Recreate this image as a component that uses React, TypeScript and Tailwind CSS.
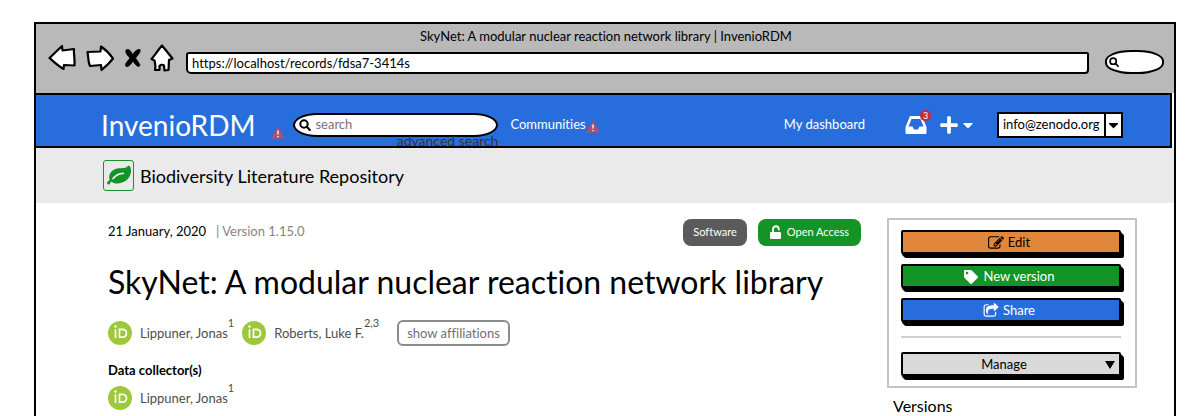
import React from "react";
import { FaCaretDown, FaPlus, FaTag } from "react-icons/fa";

function ArrowLeft() {
  return (
    <svg viewBox="0 0 28 28" className="size-7" fill="white" stroke="black" strokeWidth="2.2" strokeLinejoin="round" aria-hidden="true">
      <path d="M1.5 14 14 2 14.500 6.500 26 5 C25.500 10 27 15 26.500 21.500 L16 21 15.500 25 C10 22 6 18 1.500 14Z" />
    </svg>
  );
}

function ArrowRight() {
  return (
    <svg viewBox="0 0 28 28" className="size-7" fill="white" stroke="black" strokeWidth="2.2" strokeLinejoin="round" aria-hidden="true">
      <path d="M1.500 8 14.500 7.500 15 2.500 C20 6 24 10 27 14.500 C23 20 19 23 15.500 26 L15 21 4 22 C2 18 2.500 13 1.500 8Z" />
    </svg>
  );
}

function Stop() {
  return (
    <svg viewBox="0 0 18 20" className="h-5 w-[18px]" stroke="black" strokeWidth="0.8" aria-hidden="true">
      <path d="M2 2 C4 .5 7 2 8.500 7 C10 4 13 1 16 1.500 C17 4 14 7 11.500 10 C13 12 15 15 16 17 C15 20 12 18 9 13 C7 16 5 19 2 18.500 C0 16 4 13 6 10 C4 8 1 5 2 2Z" />
    </svg>
  );
}

function Home() {
  return (
    <svg viewBox="0 0 24 28" className="h-7 w-6" fill="white" stroke="black" strokeWidth="2.2" strokeLinejoin="round" aria-hidden="true">
      <path d="M12 1.500 22.500 14.500 19 16 18.500 26 14.500 26.500 14 21.500 C12 20 10 21 9.500 22 L9.500 26 5 26 C6 22 5 19 4.500 16.500 L1.500 15 C5 11 8 6 12 1.500Z" />
    </svg>
  );
}

function Magnifier({ className }: { className: string }) {
  return (
    <svg viewBox="0 0 12 12" className={className} fill="none" stroke="black" strokeWidth="2" strokeLinecap="round" aria-hidden="true">
      <circle cx="5" cy="5" r="3.700" />
      <path d="M7.800 7.800 10.800 11" />
    </svg>
  );
}

function Warning() {
  return (
    <svg viewBox="0 0 14 13" className="h-[13px] w-3.5 shrink-0" aria-hidden="true">
      <path d="M7 .5 13.700 12.500H.3Z" fill="#b25069" />
      <path d="M7 4.500v4M7 10v1.300" stroke="#ecd4e0" strokeWidth="1.700" />
    </svg>
  );
}

function Leaf() {
  return (
    <svg viewBox="0 0 1792 1792" className="size-6" fill="currentColor" aria-hidden="true">
      <path d="M1280 704q0-26-19-45t-45-19q-172 0-318 49.500t-259.500 134-235.500 219.500q-19 21-19 45 0 26 19 45t45 19q24 0 45-19 27-24 74-71t67-66q137-124 268.500-176t313.500-52q26 0 45-19t19-45zm512-198q0 95-20 193-46 224-184.500 383t-357.500 268q-214 108-438 108-148 0-286-47-15-5-88-42t-96-37q-16 0-39.500 32t-45 70-52.500 70-60 32q-43 0-63.500-17.500t-45.500-59.500q-2-4-6-11t-5.500-10-3-9.500-1.500-13.500q0-35 31-73.500t68-65.500 68-56 31-48q0-4-14-38t-16-44q-9-51-9-104 0-115 43.500-220t119-184.500 170.500-139 204-95.500q55-18 145-25.500t179.500-9 178.500-6 163.500-24 113.500-56.500l29.500-29.500 29.500-28 27-20 36.500-16 43.500-4.500q39 0 70.500 46t47.500 112 24 124 8 96z" />
    </svg>
  );
}

function Inbox() {
  return (
    <svg viewBox="0 0 22 18" className="h-[18px] w-[22px]" aria-hidden="true">
      <path d="M5 0H17L21.500 11V17Q21.500 18 20.500 18H1.500Q.5 18 .5 17V11ZM6.500 3 3.500 10.500H7.500L9 13.500H13L14.500 10.500H18.500L15.500 3Z" fill="white" fillRule="evenodd" />
    </svg>
  );
}

function Unlock() {
  return (
    <svg viewBox="0 0 11 14" className="h-3.5 w-[11px]" aria-hidden="true">
      <rect y="7" width="11" height="7" rx="1" fill="white" />
      <path d="M3 7.500V4.300C3 .2 8.800.2 8.800 4.500" fill="none" stroke="white" strokeWidth="1.800" strokeLinecap="round" />
    </svg>
  );
}

function EditIcon() {
  return (
    <svg viewBox="0 0 1792 1792" className="size-4" fill="currentColor" aria-hidden="true">
      <path d="M888 1184l116-116-152-152-116 116v56h96v96h56zm440-720q-16-16-33 1l-350 350q-17 17-1 33t33-1l350-350q17-17 1-33zm80 594v190q0 119-84.500 203.500t-203.500 84.500h-832q-119 0-203.500-84.500t-84.500-203.500v-832q0-119 84.500-203.500t203.500-84.500h832q63 0 117 25 15 7 18 23 3 17-9 29l-49 49q-14 14-32 8-23-6-45-6h-832q-66 0-113 47t-47 113v832q0 66 47 113t113 47h832q66 0 113-47t47-113v-126q0-13 9-22l64-64q15-15 35-7t20 29zm-96-738l288 288-672 672h-288v-288zm444 132l-92 92-288-288 92-92q28-28 68-28t68 28l152 152q28 28 28 68t-28 68z" />
    </svg>
  );
}

function ShareIcon() {
  return (
    <svg viewBox="0 0 1792 1792" className="size-4" fill="currentColor" aria-hidden="true">
      <path d="M1472 989v259q0 119-84.500 203.500t-203.500 84.500h-832q-119 0-203.500-84.500t-84.500-203.500v-832q0-119 84.500-203.500t203.500-84.500h255q13 0 22.500 9.500t9.500 22.500q0 27-26 32-77 26-133 60-10 4-16 4h-112q-66 0-113 47t-47 113v832q0 66 47 113t113 47h832q66 0 113-47t47-113v-214q0-19 18-29 28-13 54-37 16-16 35-8 21 9 21 29zm237-496l-384 384q-18 19-45 19-12 0-25-5-39-17-39-59v-192h-160q-323 0-438 131-119 137-74 473 3 23-20 34-8 2-12 2-16 0-26-13-10-14-21-31t-39.500-68.500-49.500-99.500-38.500-114-17.500-122q0-49 3.500-91t14-90 28-88 47-81.500 68.500-74 94.500-61.500 124.500-48.500 159.500-30.500 196.500-11h160v-192q0-42 39-59 13-5 25-5 26 0 45 19l384 384q19 19 19 45t-19 45z" />
    </svg>
  );
}

function Orcid() {
  return (
    <svg viewBox="0 0 24 24" className="size-6 shrink-0" aria-hidden="true">
      <circle cx="12" cy="12" r="12" fill="#9dc83c" />
      <path d="M7.500 8.300V17M11.500 8.300V16.200H14C20 16.200 20 8.300 14 8.300Z" fill="none" stroke="white" strokeWidth="1.700" />
      <circle cx="7.500" cy="5.500" r="1.200" fill="white" />
    </svg>
  );
}

function Creator({ name, marks }: { name: string; marks: string }) {
  return (
    <span className="flex items-center gap-2">
      <Orcid />
      <span className="flex whitespace-nowrap text-[13px] leading-6 text-[#4d4d4d]">
        {name}
        <sup className="-top-2.5 text-[11px] leading-6">{marks}</sup>
      </span>
    </span>
  );
}

const sketchButton =
  "flex h-6 w-full items-center justify-center rounded-[2px] border-2 border-black pr-1 pt-0.5 text-[13px] shadow-[1px_2px_0_black,2px_3px_0_black,3px_4px_0_black]";

export default function App() {
  return (
    <div className="min-h-screen bg-white pl-[34px] pr-7 pt-[22px] font-['Lato','Open_Sans',sans-serif] text-black [font-variant-ligatures:no-common-ligatures]">
      <div className="flex min-h-[394px] flex-col border-x-2 border-t-2 border-black">
        <header className="h-[69px] bg-[#b9b9b9] pl-3 pr-2.5">
          <p className="pt-1 text-center text-[13px] leading-4">
            SkyNet: A modular nuclear reaction network library | InvenioRDM
          </p>
          <div className="flex items-start">
            <button aria-label="Back"><ArrowLeft /></button>
            <button aria-label="Forward" className="ml-2.5"><ArrowRight /></button>
            <button aria-label="Stop" className="ml-2.5 pt-1"><Stop /></button>
            <button aria-label="Home" className="ml-2"><Home /></button>
            <input
              aria-label="Address"
              defaultValue="https://localhost/records/fdsa7-3414s"
              className="ml-3 mt-2 h-[22px] min-w-0 flex-1 rounded-[3px_2px_4px_5px] border-2 border-black bg-white px-1 text-[13px] leading-4 outline-none"
            />
            <label className="ml-4 mt-1.5 flex h-6 w-[59px] items-center rounded-[26px/11px] border-2 border-black bg-white pl-0.5">
              <Magnifier className="size-2.5 shrink-0" />
              <input aria-label="Web search" className="w-full min-w-0 bg-transparent outline-none" />
            </label>
          </div>
        </header>

        <nav className="mr-0.5 flex h-[55px] items-center border-y-2 border-r-2 border-black bg-[#276edc] pl-[65px] pr-[47px] pt-2 text-[13px] text-white">
          <a href="#home" className="text-[28px] leading-9">InvenioRDM</a>
          <span className="ml-4 mt-4"><Warning /></span>
          <div className="relative ml-2">
            <label className="flex h-6 w-[205px] items-center gap-1 rounded-[24px/12px] border-2 border-black bg-white px-1">
              <Magnifier className="size-3 shrink-0" />
              <input aria-label="Search" placeholder="search" className="w-full min-w-0 bg-transparent text-[13px] text-black outline-none placeholder:text-[#77737d]" />
            </label>
            <a href="#advanced" className="absolute right-0 top-5 whitespace-nowrap text-sm leading-4 text-[#333]">advanced search</a>
          </div>
          <a href="#communities" className="ml-3">Communities</a>
          <span className="mt-1"><Warning /></span>
          <a href="#dashboard" className="ml-auto">My dashboard</a>
          <button aria-label="Requests" className="relative ml-10">
            <Inbox />
            <span className="absolute -right-1 -top-1.5 flex size-[11px] items-center justify-center rounded-full bg-[#c9282d] text-[9px] leading-none">3</span>
          </button>
          <button aria-label="Create" className="ml-3 flex items-center gap-1">
            <FaPlus className="size-5" />
            <FaCaretDown className="h-4 w-2.5" />
          </button>
          <div className="ml-6 grid border-2 border-black bg-white text-black">
            <select aria-label="Account" className="col-start-1 row-start-1 h-[22px] w-[122px] appearance-none bg-transparent pl-1 text-[13px] outline-none">
              <option>info@zenodo.org</option>
            </select>
            <span className="pointer-events-none col-start-1 row-start-1 flex w-[17px] items-center justify-center justify-self-end border-l-2 border-black">
              <FaCaretDown className="size-4" />
            </span>
          </div>
        </nav>

        <section className="flex h-[55px] items-center gap-1.5 bg-[#eaeaea] pl-[67px]">
          <span className="flex size-[31px] items-center justify-center rounded-[3px] border border-[#149327] text-[#149327]">
            <Leaf />
          </span>
          <a href="#community" className="text-lg">Biodiversity Literature Repository</a>
        </section>

        <main className="flex gap-[26px] pl-[72px] pr-[37px] pt-[15px]">
          <article className="min-w-0 flex-1">
            <div className="flex h-7 items-center text-[13px]">
              <time dateTime="2020-01-21">21 January, 2020</time>
              <span className="ml-2.5 text-[#858585]">| Version 1.15.0</span>
              <span className="ml-auto flex h-[27px] items-center rounded-lg bg-[#5b5b5b] px-2.5 text-[11px] text-white">Software</span>
              <span className="ml-[11px] flex h-[27px] items-center gap-1.5 rounded-lg bg-[#149327] px-3 text-[11px] text-white">
                <Unlock />
                Open Access
              </span>
            </div>
            <h1 className="mt-4 whitespace-nowrap text-[32px] leading-10">
              SkyNet: A modular nuclear reaction network library
            </h1>
            <div className="mt-[18px] flex h-[26px] items-center gap-2">
              <Creator name="Lippuner, Jonas" marks="1" />
              <Creator name="Roberts, Luke F." marks="2,3" />
              <button className="ml-2.5 h-[26px] rounded-md border-2 border-[#8b8b8b] px-2 text-[13px] leading-5 text-[#716d78]">
                show affiliations
              </button>
            </div>
            <h2 className="mt-3.5 text-[13px] font-bold leading-5">Data collector(s)</h2>
            <div className="mt-1.5">
              <Creator name="Lippuner, Jonas" marks="1" />
            </div>
          </article>

          <aside className="w-[250px] shrink-0">
            <div className="border-2 border-[#c4c4c4] pb-2.5 pl-3 pr-3.5 pt-2.5">
              <div className="flex flex-col gap-2.5">
                <button className={`${sketchButton} gap-1 bg-[#e1873c]`}><EditIcon />Edit</button>
                <button className={`${sketchButton} gap-1.5 bg-[#149327] text-white`}><FaTag className="size-3.5" />New version</button>
                <button className={`${sketchButton} gap-1 bg-[#276edc] text-white`}><ShareIcon />Share</button>
              </div>
              <hr className="my-3.5 border-t-2 border-[#d0d0d0]" />
              <button className={`${sketchButton} bg-[#d9d9d9]`}>
                <span className="flex-1">Manage</span>
                <svg viewBox="0 0 10 8" className="h-2 w-2.5" aria-hidden="true"><path d="M0 0H10L5 8Z" /></svg>
              </button>
            </div>
            <h2 className="mt-1.5 pl-1.5 text-base leading-6">Versions</h2>
          </aside>
        </main>
      </div>
    </div>
  );
}
